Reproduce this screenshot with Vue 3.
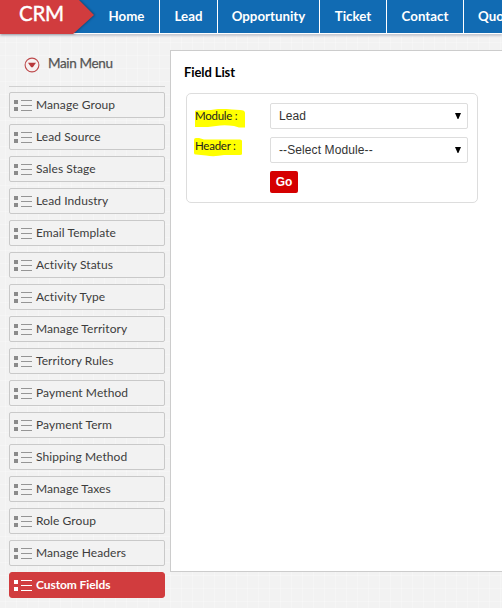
<script setup>
const tabs = [
  { label: 'Home', cls: 'home' },
  { label: 'Lead', cls: 'lead' },
  { label: 'Opportunity', cls: 'opportunity' },
  { label: 'Ticket', cls: 'ticket' },
  { label: 'Contact', cls: 'contact' },
  { label: 'Quo', cls: 'quotes' },
]
const items = [
  'Manage Group', 'Lead Source', 'Sales Stage', 'Lead Industry', 'Email Template',
  'Activity Status', 'Activity Type', 'Manage Territory', 'Territory Rules',
  'Payment Method', 'Payment Term', 'Shipping Method', 'Manage Taxes',
  'Role Group', 'Manage Headers', 'Custom Fields',
]
const active = 'Custom Fields'
const fields = [
  { label: 'Module :', value: 'Lead', cls: 'module', mark: 'M1 2.5Q1 1 4 1.5L17 1Q26 -1 38 .5L46 1Q51 1 51 4V18.5H45L40 17Q30 15.5 22 17L14 18H1Z' },
  { label: 'Header :', value: '--Select Module--', cls: 'header', mark: 'M0 2Q0 0 2 0H5L10 1.5H46Q48 1.5 48 3V16Q48 17 46 17H30Q20 19 12 17.5L2 16.5Q0 16.5 0 15Z' },
]
</script>

<template>
  <div class="page">
    <header class="topbar">
      <div class="brand">
        <svg class="brand-shape" width="98" height="34" viewBox="0 0 98 34">
          <path d="M0 0H79L94 15L73 34H0Z" fill="#d13c3e" />
        </svg>
        <span class="brand-name">CRM</span>
      </div>
      <nav class="tabs">
        <a v-for="t in tabs" :key="t.label" class="tab" :class="t.cls">{{ t.label }}</a>
      </nav>
    </header>
    <div class="body">
      <aside class="side">
        <div class="side-title">
          <svg width="16" height="16" viewBox="0 0 16 16">
            <circle cx="8" cy="8" r="6.9" fill="#f7f1f1" stroke="#bd4a4c" stroke-width="1.1" />
            <path d="M4 5.8H12L8.8 10.3H7.2Z" fill="#b8383b" />
          </svg>
          <span>Main Menu</span>
        </div>
        <ul class="menu">
          <li v-for="i in items" :key="i" class="item" :class="{ active: i === active }">
            <svg class="list-icon" width="18" height="12" viewBox="0 0 18 12">
              <path d="M0 1H4V5H0ZM0 8H4V12H0Z" class="dots" />
              <path d="M7 1.5H18M7 6.5H18M7 11.5H18" class="lines" />
            </svg>
            <span>{{ i }}</span>
          </li>
        </ul>
      </aside>
      <main class="panel">
        <h1>Field List</h1>
        <div class="form">
          <div v-for="f in fields" :key="f.label" class="row">
            <div class="label" :class="f.cls">
              <svg class="mark" width="52" height="20" viewBox="0 0 52 20"><path :d="f.mark" fill="#ff0" /></svg>
              <span>{{ f.label }}</span>
            </div>
            <div class="select">
              <span>{{ f.value }}</span>
              <svg width="6" height="6" viewBox="0 0 6 6"><path d="M0 0H6L3.4 6H2.6Z" fill="#000" /></svg>
            </div>
          </div>
          <button class="go">Go</button>
        </div>
      </main>
    </div>
  </div>
</template>

<style>
body { margin: 0; overflow: hidden; }
</style>

<style scoped>
.page {
  width: 502px;
  height: 608px;
  overflow: hidden;
  font-family: Lato, sans-serif;
  background-color: #f2f2f2;
  background-image:
    repeating-linear-gradient(90deg, transparent 0 5px, rgba(255, 255, 255, .25) 5px 6px, transparent 6px 11px),
    repeating-linear-gradient(0deg, transparent 0 6px, rgba(255, 255, 255, .25) 6px 7px, transparent 7px 13px);
}
.topbar {
  display: flex;
  height: 33px;
  background: #116bb3;
  border-bottom: 1px solid #fff;
  box-shadow: 0 2px 2px #c5c8d0;
  position: relative;
}
.brand { position: relative; width: 94px; flex: none; }
.brand-shape { position: absolute; left: 0; top: 0; filter: drop-shadow(1px 0 1px rgba(0, 0, 0, .35)); }
.brand-name {
  position: relative;
  display: block;
  padding-left: 19px;
  color: #fff;
  font-size: 20.5px;
  letter-spacing: -.3px;
  line-height: 26px;
  -webkit-text-stroke: .4px #fff;
}
.tabs { display: flex; flex: none; }
.tab {
  box-sizing: border-box;
  height: 33px;
  line-height: 32px;
  border-right: 1px solid #fff;
  color: #fff;
  font-size: 13.3px;
  font-weight: 700;
  text-align: center;
  white-space: nowrap;
}
.home { width: 66px; }
.lead { width: 58px; }
.opportunity { width: 102px; }
.ticket { width: 67px; }
.contact { width: 77px; }
.quotes { width: 77px; padding-left: 14px; text-align: left; }
.body { display: flex; padding-top: 16px; }
.side { width: 156px; margin-left: 9px; flex: none; }
.side-title {
  display: flex;
  align-items: center;
  gap: 8px;
  height: 28px;
  padding: 0 0 8px 15px;
  border-bottom: 1px solid #d0d0d0;
  color: #555;
  font-size: 13.5px;
  letter-spacing: -.35px;
  -webkit-text-stroke: .25px #555;
}
.side-title svg { position: relative; top: .5px; }
.side-title span { position: relative; top: -1px; }
.menu { display: flex; flex-direction: column; gap: 6px; margin: 5px 0 0; padding: 0; list-style: none; }
.item {
  box-sizing: border-box;
  display: flex;
  align-items: center;
  gap: 4px;
  height: 26px;
  padding: 0 0 2px 4px;
  border: 1px solid #c9c9c9;
  border-radius: 2px;
  background: #f2f2f2;
  color: #3c3c3c;
  font-size: 12px;
  letter-spacing: .08px;
  white-space: nowrap;
}
.list-icon { position: relative; top: 1px; }
.dots { fill: #8a8a8a; }
.lines { fill: none; stroke: #959595; }
.active { background: #d13c3e; border-color: #d13c3e; color: #fff; font-weight: 700; letter-spacing: -.08px; border-radius: 3px; }
.active .dots { fill: #fff; }
.active .lines { stroke: #fff; }
.panel {
  box-sizing: border-box;
  width: 400px;
  height: 522px;
  margin-left: 5px;
  padding: 13px 0 0 13px;
  flex: none;
  border: 1px solid #ccc;
  background: #fff;
}
h1 { margin: 0; color: #000; font-size: 13px; font-weight: 700; letter-spacing: -.1px; line-height: 16px; }
.form {
  box-sizing: border-box;
  width: 292px;
  height: 110px;
  margin: 13px 0 0 2px;
  padding: 9px 0 0 8px;
  border: 1px solid #ddd;
  border-radius: 5px;
}
.row { display: flex; margin-bottom: 8px; }
.label {
  position: relative;
  width: 75px;
  color: #222;
  font-size: 11.5px;
  letter-spacing: -.25px;
  line-height: 26px;
}
.label span { position: relative; }
.header { line-height: 18px; }
.mark { position: absolute; left: -1px; top: 6px; }
.header .mark { top: 1px; }
.select {
  box-sizing: border-box;
  display: flex;
  align-items: center;
  justify-content: space-between;
  width: 198px;
  height: 26px;
  padding: 0 6px 0 8px;
  border: 1px solid #ddd;
  border-radius: 2px;
  background: #fff;
  color: #333;
  font-family: "Liberation Sans", sans-serif;
  font-size: 12px;
  letter-spacing: .1px;
}
.go {
  display: block;
  width: 28px;
  height: 22px;
  margin-left: 75px;
  padding: 0;
  border: 0;
  border-radius: 2px;
  background: #d50000;
  color: #fff;
  font: bold 12px "Liberation Sans", sans-serif;
}
</style>
